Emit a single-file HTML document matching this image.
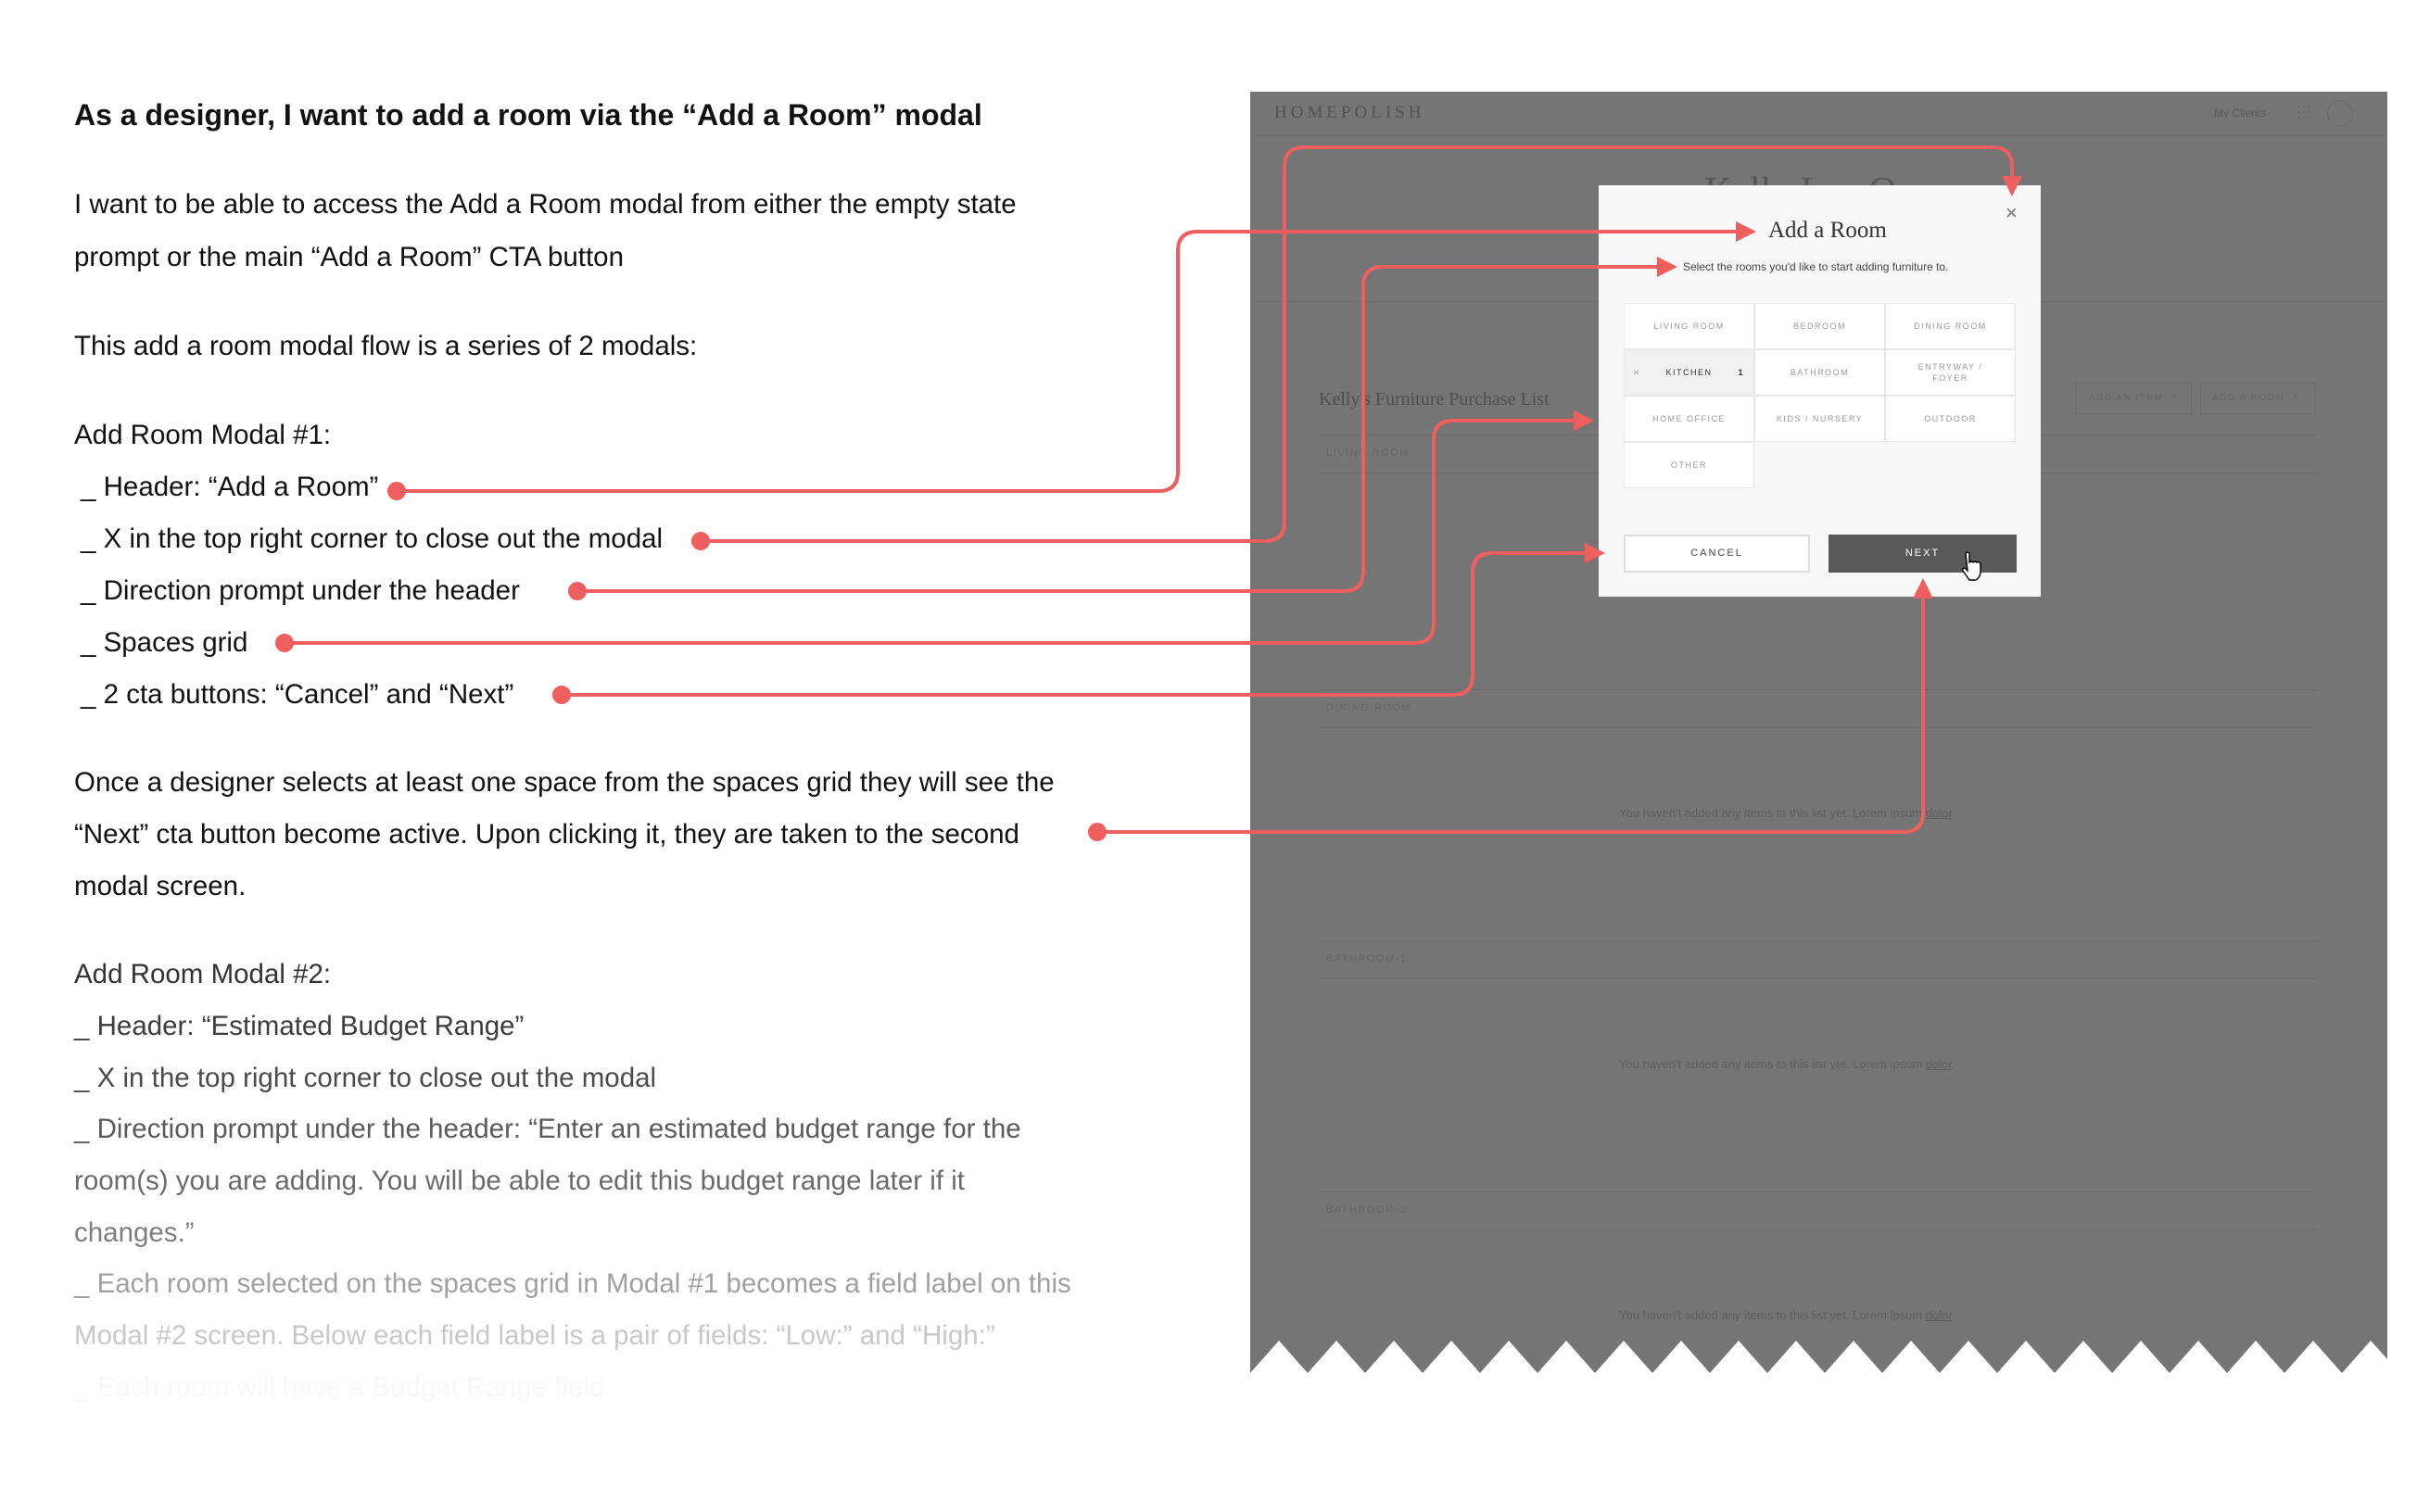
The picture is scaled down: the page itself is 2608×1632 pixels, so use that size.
<!DOCTYPE html>
<html><head><meta charset="utf-8"><style>
*{margin:0;padding:0;box-sizing:border-box}
body{width:2608px;height:1632px;background:#fff;position:relative;overflow:hidden;font-family:"Liberation Sans",sans-serif}
.t{position:absolute;left:80px;font-size:29.5px;line-height:40px;white-space:nowrap;color:#111}
.h{font-weight:bold;font-size:32px}
.p{position:absolute;left:1349px;top:99px;width:1227px;height:1383px;background:#757575;overflow:hidden}
.ab{position:absolute;white-space:nowrap}
.modal{position:absolute;left:1725px;top:200px;width:477px;height:444px;background:#f8f8f8}
.cell{position:absolute;width:141px;height:50px;background:#fff;border:1px solid #e8e8e8;font-size:9px;letter-spacing:1.5px;color:#999;display:flex;align-items:center;justify-content:center;text-align:center;line-height:12px}
.serif{font-family:"Liberation Serif",serif}
.card{position:absolute;left:74px;width:1076px;border-top:1px solid #6c6c6c}
.lbl{font-size:11px;letter-spacing:1.5px;color:#676767}
</style></head><body>
<div class="t h" style="top:104px">As a designer, I want to add a room via the “Add a Room” modal</div>
<div class="t" style="top:201px">I want to be able to access the Add a Room modal from either the empty state</div>
<div class="t" style="top:258px">prompt or the main “Add a Room” CTA button</div>
<div class="t" style="top:354px">This add a room modal flow is a series of 2 modals:</div>
<div class="t" style="top:450px">Add Room Modal #1:</div>
<div class="t" style="top:506px;left:87px">_ Header: “Add a Room”</div>
<div class="t" style="top:562px;left:87px">_ X in the top right corner to close out the modal</div>
<div class="t" style="top:618px;left:87px">_ Direction prompt under the header</div>
<div class="t" style="top:674px;left:87px">_ Spaces grid</div>
<div class="t" style="top:730px;left:87px">_ 2 cta buttons: “Cancel” and “Next”</div>
<div class="t" style="top:825px">Once a designer selects at least one space from the spaces grid they will see the</div>
<div class="t" style="top:881px">“Next” cta button become active. Upon clicking it, they are taken to the second</div>
<div class="t" style="top:937px">modal screen.</div>
<div class="t" style="top:1032px;color:#333">Add Room Modal #2:</div>
<div class="t" style="top:1088px;color:#3d3d3d">_ Header: “Estimated Budget Range”</div>
<div class="t" style="top:1144px;color:#4a4a4a">_ X in the top right corner to close out the modal</div>
<div class="t" style="top:1199px;color:#5a5a5a">_ Direction prompt under the header: “Enter an estimated  budget range for the</div>
<div class="t" style="top:1255px;color:#6a6a6a">room(s) you are adding. You will be able to  edit this budget range later if it</div>
<div class="t" style="top:1311px;color:#7e7e7e">changes.”</div>
<div class="t" style="top:1366px;color:#a0a0a0">_ Each room selected on the spaces grid in Modal #1 becomes  a field label on this</div>
<div class="t" style="top:1422px;color:#c8c8c8">Modal #2 screen. Below each field label is a  pair of fields: “Low:” and “High:”</div>
<div class="t" style="top:1478px;color:#f8f8f8">_ Each room will have a Budget Range field</div>

<div class="p">
  <div class="ab serif" style="left:26px;top:12px;font-size:19px;letter-spacing:4px;color:#525252">HOMEPOLISH</div>
  <div class="ab" style="left:1040px;top:16px;font-size:12px;color:#5a5a5a">My Clients</div>
  <div class="ab" style="left:1130px;top:15px;font-size:14px;color:#5e5e5e;letter-spacing:1px;line-height:6px">:::<br>:::</div>
  <div class="ab" style="left:1162px;top:9px;width:28px;height:28px;border-radius:50%;border:1px solid #6c6c6c"></div>
  <div class="ab" style="left:0;top:47px;width:1233px;border-top:1px solid #6e6e6e"></div>
  <div class="ab serif" style="left:490px;top:84px;font-size:42px;color:#555">Kelly Lee Owens</div>
  <div class="ab" style="left:0;top:226px;width:1233px;border-top:1px solid #6e6e6e"></div>
  <div class="ab serif" style="left:74px;top:321px;font-size:20px;color:#4e4e4e">Kelly's Furniture Purchase List</div>
  <div class="ab lbl" style="left:890px;top:314px;width:126px;height:34px;border:1px solid #6c6c6c;padding:10px 14px;font-size:10px">ADD AN ITEM &nbsp;+</div>
  <div class="ab lbl" style="left:1025px;top:314px;width:125px;height:34px;border:1px solid #6c6c6c;padding:10px 12px;font-size:10px">ADD A ROOM &nbsp;+</div>
  <div class="card" style="top:370px;height:270px"><div class="ab lbl" style="left:8px;top:13px">LIVING ROOM</div><div class="ab" style="left:0;top:40px;width:1076px;border-top:1px solid #6c6c6c"></div></div>
  <div class="card" style="top:645px;height:270px"><div class="ab lbl" style="left:8px;top:13px">DINING ROOM</div><div class="ab" style="left:0;top:40px;width:1076px;border-top:1px solid #6c6c6c"></div></div>
  <div class="card" style="top:916px;height:270px"><div class="ab lbl" style="left:8px;top:13px">BATHROOM-1</div><div class="ab" style="left:0;top:40px;width:1076px;border-top:1px solid #6c6c6c"></div></div>
  <div class="card" style="top:1187px;height:270px"><div class="ab lbl" style="left:8px;top:13px">BATHROOM-2</div><div class="ab" style="left:0;top:40px;width:1076px;border-top:1px solid #6c6c6c"></div></div>
  <div class="ab" style="left:398px;top:771px;font-size:13px;color:#5e5e5e">You haven't added any items to this list yet. Lorem ipsum <u>dolor</u>.</div>
  <div class="ab" style="left:398px;top:1042px;font-size:13px;color:#5e5e5e">You haven't added any items to this list yet. Lorem ipsum <u>dolor</u>.</div>
  <div class="ab" style="left:398px;top:1313px;font-size:13px;color:#5e5e5e">You haven't added any items to this list yet. Lorem ipsum <u>dolor</u>.</div>
</div>
<svg style="position:absolute;left:0;top:0" width="2608" height="1632">
<polygon fill="#fff" points="1349,1482 1380,1447 1411,1482 1442,1447 1473,1482 1504,1447 1535,1482 1566,1447 1597,1482 1628,1447 1659,1482 1690,1447 1721,1482 1752,1447 1783,1482 1814,1447 1845,1482 1876,1447 1907,1482 1938,1447 1969,1482 2000,1447 2031,1482 2062,1447 2093,1482 2124,1447 2155,1482 2186,1447 2217,1482 2248,1447 2279,1482 2310,1447 2341,1482 2372,1447 2403,1482 2434,1447 2465,1482 2496,1447 2527,1482 2558,1447 2576,1467 2576,1500 1349,1500"/>
</svg>

<div class="modal">
  <div class="ab serif" style="left:183px;top:35px;font-size:25px;color:#333">Add a Room</div>
  <div class="ab" style="left:439px;top:17px;font-size:22px;color:#777;font-weight:300">×</div>
  <div class="ab" style="left:91px;top:81px;font-size:12px;color:#444">Select the rooms you'd like to start adding furniture to.</div>
  <div class="cell" style="left:27px;top:127px">LIVING ROOM</div>
  <div class="cell" style="left:168px;top:127px">BEDROOM</div>
  <div class="cell" style="left:309px;top:127px">DINING ROOM</div>
  <div class="cell" style="left:27px;top:177px;background:#f1f1f1;color:#333">KITCHEN<span style="position:absolute;left:9px;color:#aaa;font-size:12px">×</span><span style="position:absolute;right:10px;font-weight:bold">1</span></div>
  <div class="cell" style="left:168px;top:177px">BATHROOM</div>
  <div class="cell" style="left:309px;top:177px">ENTRYWAY /<br>FOYER</div>
  <div class="cell" style="left:27px;top:227px">HOME OFFICE</div>
  <div class="cell" style="left:168px;top:227px">KIDS / NURSERY</div>
  <div class="cell" style="left:309px;top:227px">OUTDOOR</div>
  <div class="cell" style="left:27px;top:277px">OTHER</div>
  <div class="ab" style="left:27px;top:377px;width:201px;height:41px;border:2px solid #ddd;background:#fff;font-size:11px;letter-spacing:2px;color:#444;text-align:center;line-height:37px">CANCEL</div>
  <div class="ab" style="left:248px;top:377px;width:203px;height:41px;background:#595959;font-size:11px;letter-spacing:2px;color:#fff;text-align:center;line-height:41px">NEXT</div>
  <svg class="ab" style="left:390px;top:395px" width="24" height="32" viewBox="0 0 24 32"><path d="M6 2 q2-2 4 0 v10 q2-2 4 0 q2-2 4 0 q2-1 4 1 v9 q0 6-5 9 h-7 l-7-10 q-1-3 2-3 l3 3 z" fill="#fff" stroke="#000" stroke-width="1.4"/></svg>
</div>

<svg style="position:absolute;left:0;top:0" width="2608" height="1632" fill="none" stroke="#ef5f5f" stroke-width="4">
<path d="M428 530 H1250 q21 0 21 -21 V271 q0 -21 21 -21 H1880"/>
<path d="M756 584 H1365 q21 0 21 -21 V180 q0 -21 21 -21 H2150 q21 0 21 21 V198"/>
<path d="M623 638 H1450 q21 0 21 -21 V309 q0 -21 21 -21 H1795"/>
<path d="M307 694 H1526 q21 0 21 -21 V475 q0 -21 21 -21 H1705"/>
<path d="M606 750 H1568 q21 0 21 -21 V618 q0 -21 21 -21 H1717"/>
<path d="M1184 898 H2054 q21 0 21 -21 V640"/>
<g fill="#ef5f5f" stroke="none">
<circle cx="428" cy="530" r="10"/><circle cx="756" cy="584" r="10"/><circle cx="623" cy="638" r="10"/><circle cx="307" cy="694" r="10"/><circle cx="606" cy="750" r="10"/><circle cx="1184" cy="898" r="10"/>
<polygon points="1895,250 1873,239 1873,261"/>
<polygon points="2171,212 2160,190 2182,190"/>
<polygon points="1810,288 1788,277 1788,299"/>
<polygon points="1720,454 1698,443 1698,465"/>
<polygon points="1732,597 1710,586 1710,608"/>
<polygon points="2075,624 2064,646 2086,646"/>
</g>
</svg>
</body></html>
